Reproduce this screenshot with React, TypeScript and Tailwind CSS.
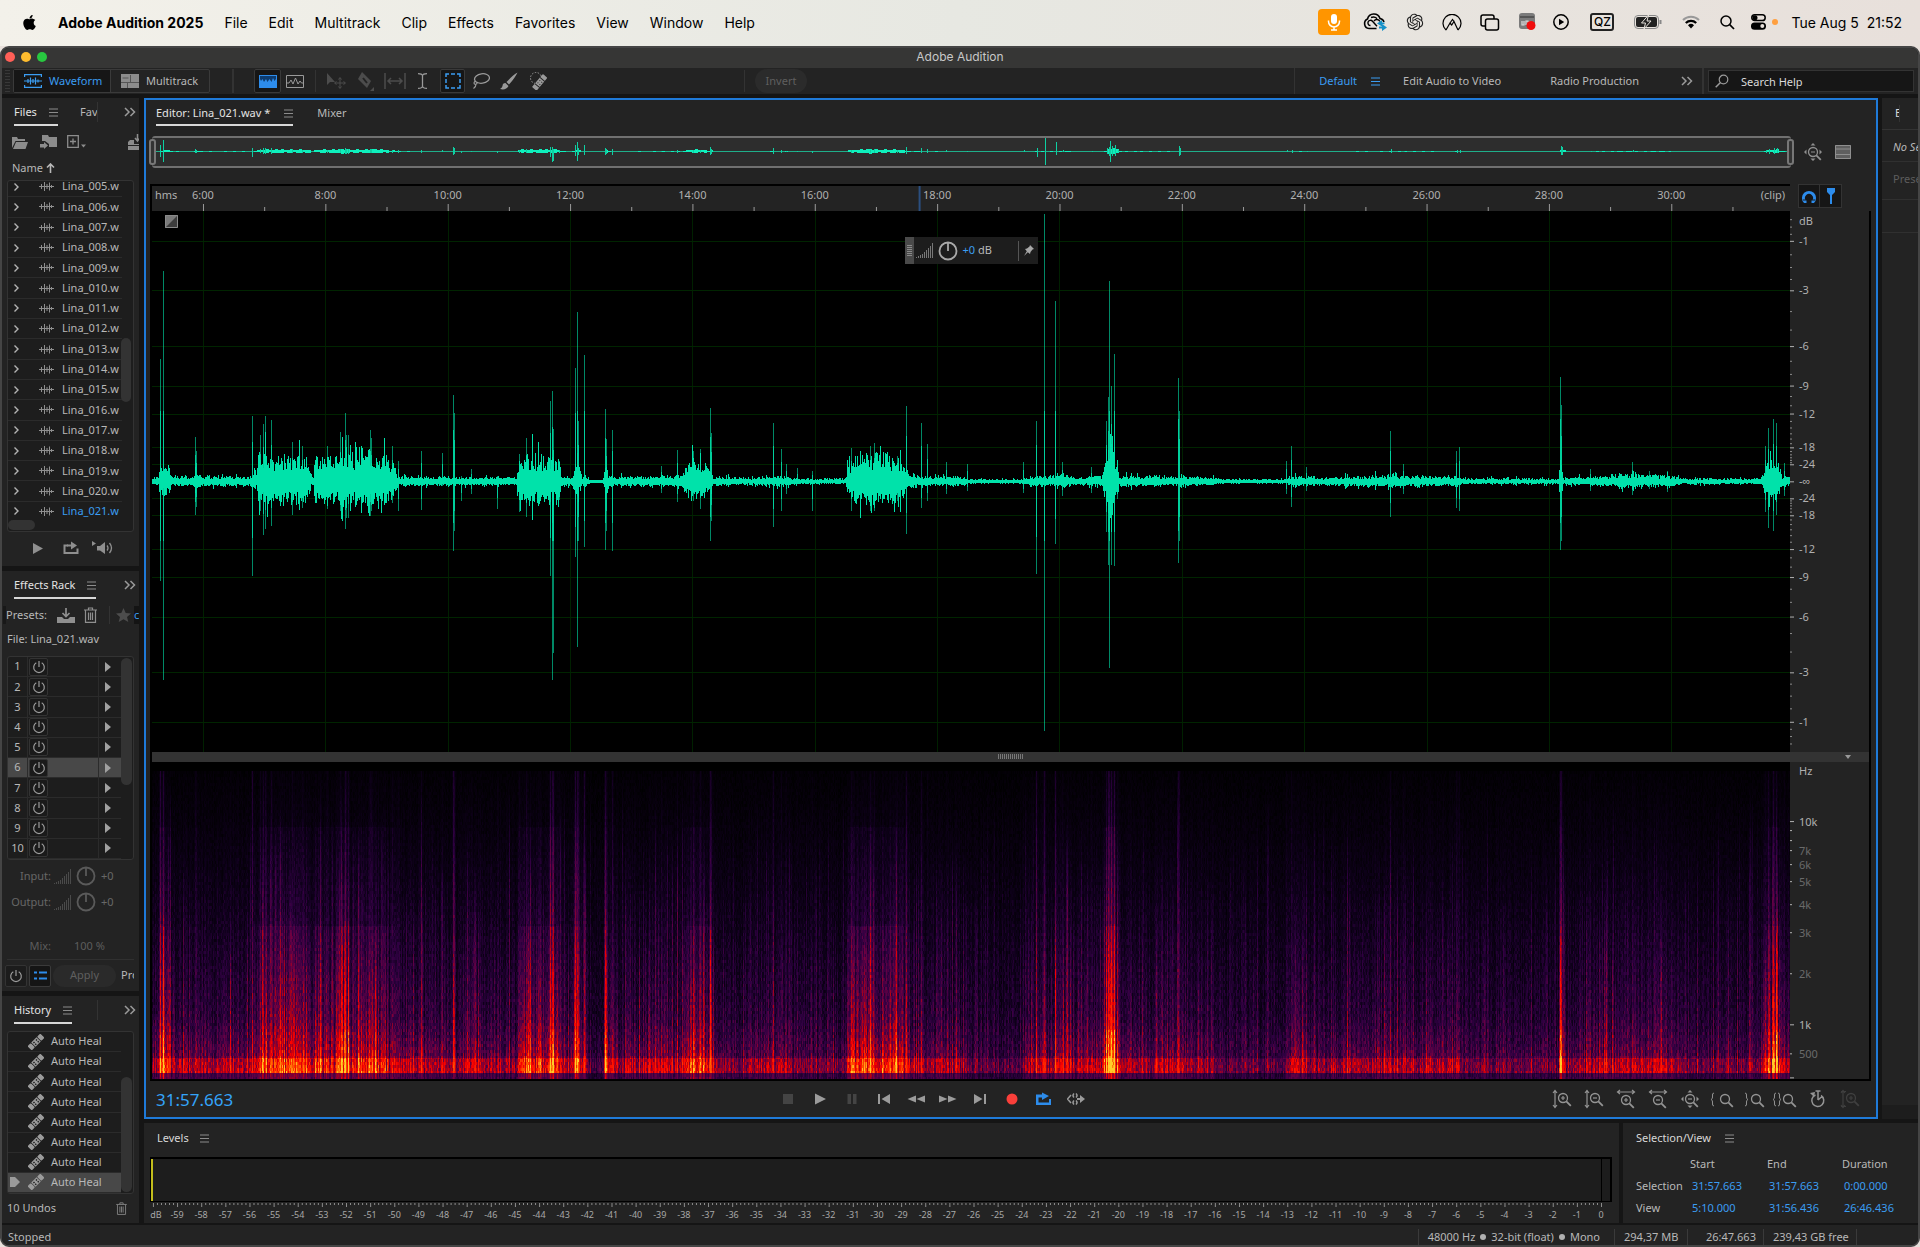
import { useEffect, useRef } from 'react';
import type { ReactNode } from 'react';
import { FaApple } from 'react-icons/fa';
import { RiOpenaiFill } from 'react-icons/ri';

/* ---------- data ---------- */

const menus = ['File', 'Edit', 'Multitrack', 'Clip', 'Effects', 'Favorites', 'View', 'Window', 'Help'];

const files = Array.from({ length: 17 }, (_, i) => `Lina_${String(i + 5).padStart(3, '0')}.wav`);

const VIEW_W = 1638;
const VIEW_H = 540;
const MID = 270;

// [x, peak above, peak below]
const spikes: [number, number, number][] = [
  [8, 122, 100], [11, 210, 198], [43, 44, 34], [44, 30, 26], [100, 65, 95], [108, 46, 30], [111, 57, 54], [113, 65, 48],
  [119, 61, 45], [140, 39, 34], [150, 35, 27], [175, 35, 28], [188, 49, 30], [193, 68, 48], [194, 46, 37],
  [196, 46, 37], [218, 51, 35], [219, 43, 30], [240, 35, 22], [246, 20, 30], [269, 30, 29], [290, 28, 5],
  [301, 86, 70], [302, 68, 50], [309, 5, 20], [319, 12, 13], [345, 5, 28], [367, 27, 31], [374, 43, 36],
  [398, 80, 95], [400, 90, 198], [401, 52, 171], [407, 20, 19], [423, 113, 76], [425, 169, 165], [426, 60, 60],
  [432, 126, 66], [453, 72, 69], [454, 42, 50], [460, 51, 70], [509, 15, 12], [525, 31, 21], [541, 30, 20],
  [548, 32, 28], [558, 73, 60], [559, 48, 40], [621, 58, 46], [629, 32, 30], [634, 17, 13], [645, 13, 3],
  [660, 10, 30], [699, 33, 30], [718, 35, 30], [722, 38, 30], [745, 25, 20], [754, 75, 53], [769, 58, 27],
  [775, 37, 20], [794, 19, 13], [815, 17, 10], [871, 19, 12], [884, 60, 93], [892, 267, 249], [903, 180, 63],
  [910, 19, 15], [939, 14, 12], [954, 60, 51], [956, 84, 84], [957, 200, 186], [959, 95, 84], [962, 127, 85],
  [965, 20, 18], [1026, 103, 82], [1027, 70, 60], [1134, 20, 13], [1139, 35, 26], [1154, 14, 10], [1238, 50, 36],
  [1251, 17, 13], [1304, 30, 27], [1307, 34, 30], [1408, 104, 69], [1409, 76, 60], [1438, 12, 10], [1480, 19, 14],
  [1497, 10, 8], [1515, 10, 11], [1613, 35, 31], [1616, 53, 47], [1621, 62, 50], [1624, 58, 34], [1632, 18, 15],
];

// loudness outline: [x, amplitude]
const outline: [number, number][] = [
  [0, 4], [6, 5], [8, 18], [16, 14], [20, 6], [41, 5], [43, 14], [47, 6], [98, 5], [101, 12], [104, 9], [108, 24],
  [140, 25], [155, 22], [159, 7], [161, 6], [163, 25], [200, 26], [234, 24], [237, 10], [240, 20], [246, 6],
  [260, 5], [364, 4], [367, 22], [376, 25], [406, 24], [409, 7], [419, 5], [424, 18], [430, 6], [436, 3],
  [440, 1], [449, 1], [451, 5], [453, 18], [457, 6], [466, 5], [528, 6], [534, 16], [541, 22], [557, 14],
  [561, 5], [595, 4], [632, 6], [640, 3], [693, 3], [696, 18], [704, 24], [722, 28], [740, 24], [752, 16],
  [756, 8], [762, 9], [768, 5], [812, 5], [818, 2], [870, 2], [884, 6], [905, 6], [912, 8], [923, 4], [950, 5],
  [954, 30], [958, 60], [962, 30], [967, 6], [1008, 6], [1060, 4], [1070, 2], [1134, 2], [1138, 6], [1172, 4],
  [1180, 5], [1230, 6], [1244, 6], [1296, 5], [1303, 6], [1310, 3], [1406, 3], [1408, 24], [1411, 4], [1440, 5],
  [1470, 8], [1486, 7], [1520, 6], [1530, 3], [1608, 3], [1613, 14], [1618, 30], [1625, 20], [1630, 5], [1638, 5],
];

const dbMajor = [1, 3, 6, 9, 12, 18, 24];
const dbMinor = [0.25, 0.5, 0.75, 1.5, 2, 2.5, 4, 5, 7, 8, 10, 11, 13, 14, 15, 16, 17, 19, 20, 21, 22, 23];

const hzTicks: { y: number; label?: string; strong?: boolean }[] = [
  { y: 59, label: '10k', strong: true },
  { y: 68 },
  { y: 78 },
  { y: 88, label: '7k' },
  { y: 102, label: '6k' },
  { y: 119, label: '5k' },
  { y: 142, label: '4k' },
  { y: 170, label: '3k' },
  { y: 211, label: '2k' },
  { y: 262, label: '1k', strong: true },
  { y: 291, label: '500' },
  { y: 315, strong: true },
];

/* ---------- helpers ---------- */

function rng(seed: number) {
  let s = seed;
  return () => {
    s = (s * 1664525 + 1013904223) >>> 0;
    return s / 4294967296;
  };
}

function loudness(x: number) {
  for (let i = 1; i < outline.length; i++) {
    const [x1, a1] = outline[i];
    if (x <= x1) {
      const [x0, a0] = outline[i - 1];
      return a0 + ((a1 - a0) * (x - x0)) / (x1 - x0);
    }
  }
  return 4;
}

const dbToY = (db: number) => 269.5 * Math.pow(10, -db / 20);
const minuteToX = (m: number) => ((m - 5.1667) / 26.774) * 100;

function buildWave() {
  const rand = rng(21);
  let body = '';
  for (let x = 0; x < VIEW_W; x++) {
    const a = loudness(x);
    const burst = rand() > 0.86 ? 1.2 + rand() * 0.6 : 1;
    const quiet = a < 10 ? 0.85 : 1;
    const up = Math.max(1, Math.round(a * quiet * (0.4 + rand() * 0.75) * burst));
    const down = Math.max(1, Math.round(a * quiet * (0.38 + rand() * 0.6) * burst));
    body += `M${x} ${MID - up}h1V${MID + 1 + down}h-1z`;
  }
  return body;
}

const wavePath = buildWave();

/* ---------- icons ---------- */

function Svg({ w = 18, h = 18, children, className = '' }: { w?: number; h?: number; children: ReactNode; className?: string }) {
  return (
    <svg width={w} height={h} viewBox={`0 0 ${w} ${h}`} fill="none" stroke="currentColor" className={`shrink-0 ${className}`} aria-hidden="true">
      {children}
    </svg>
  );
}

const Burger = ({ className = 'text-[#8c8c8c]' }: { className?: string }) => (
  <Svg w={9} h={9} className={className}>
    <path d="M0 1h9M0 4.500h9M0 8h9" />
  </Svg>
);

const Chevrons = () => (
  <Svg w={12} h={10} className="text-[#9a9a9a]">
    <path d="M1 1l4 4-4 4M6.500 1l4 4-4 4" strokeWidth="1.500" />
  </Svg>
);

const WaveGlyph = () => (
  <Svg w={15} h={11} className="text-[#8f8f8f]">
    <path d="M0 5.500h15M2.500 3v5M5.500 1v9M8 3v5M10.500 1.500v8M12.500 4v3" />
  </Svg>
);

const Power = () => (
  <Svg w={14} h={14} className="text-[#9b9b9b]">
    <path d="M4.300 2.700a5.300 5.300 0 1 0 5.400 0M7 1v6" strokeWidth="1.200" />
  </Svg>
);

const Bandaid = () => (
  <Svg w={16} h={16} className="text-[#9b9b9b]">
    <g transform="rotate(-45 8 8)" stroke="none" fill="currentColor">
      <rect x="-1" y="5" width="4.500" height="6" rx="1" />
      <rect x="12.500" y="5" width="4.500" height="6" rx="1" />
      <path d="M4.300 5h7.400v6H4.300z" />
      <path d="M5.500 6.200h1.500v1.400H5.500zM9 6.200h1.500v1.400H9zM5.500 8.700h1.500v1.400H5.500zM9 8.700h1.500v1.400H9z" fill="#1d1d1d" />
    </g>
  </Svg>
);

const Loop = () => (
  <Svg w={16} h={14}>
    <path d="M5 4.500H1.500v7.500h13V7.500" strokeWidth="2" />
    <path d="M4 4.500h5" strokeWidth="2" />
    <path d="M8 .5l6 4-6 4z" fill="currentColor" stroke="none" />
  </Svg>
);

const Trash = ({ w = 13, h = 16 }: { w?: number; h?: number }) => (
  <svg width={w} height={h} viewBox="0 0 13 16" fill="none" stroke="currentColor" className="shrink-0" aria-hidden="true">
    <path d="M0 3h13M4.500 3V1h4v2M1.500 3v12.300h10V3M4.500 5.500v7.500M6.500 5.500v7.500M8.500 5.500v7.500" strokeWidth="1.200" />
  </svg>
);

const Ramp = ({ className }: { className: string }) => (
  <Svg w={17} h={15} className={className}>
    <path d="M.5 14v1M2.500 13v2M4.500 12v3M6.500 11v4M8.500 9v6M10.500 7v8M12.500 5v10M14.500 3v12M16.500 0v15" />
  </Svg>
);

const Knob = ({ className }: { className: string }) => (
  <Svg w={20} h={20} className={className}>
    <circle cx="10" cy="10" r="8.500" strokeWidth="1.800" />
    <path d="M10 1.500v8.500" strokeWidth="1.800" />
  </Svg>
);

const Lens = ({ sign, x = 4, y = 1 }: { sign?: '+' | '-'; x?: number; y?: number }) => (
  <g transform={`translate(${x} ${y})`}>
    <circle cx="6" cy="6" r="4.500" strokeWidth="1.300" />
    <path d="M9.300 9.300l4.500 4.500" strokeWidth="1.800" />
    {sign && <path d={sign === '+' ? 'M4 6h4M6 4v4' : 'M4 6h4'} strokeWidth="1.200" />}
  </g>
);

const zoomFull = (
  <>
    <Lens sign="-" x={3} y={3} />
    <path d="M9 0l2.500 2.500h-5zM9 18l2.500-2.500h-5zM0 9l2.500-2.500v5zM18 9l-2.500-2.500v5z" fill="currentColor" stroke="none" />
  </>
);

const vArrow = <path d="M2 1v16M0 3l2-2.500L4 3M0 15l2 2.500L4 15" strokeWidth="1.200" />;
const hArrow = <path d="M1 2h16M3 0L.5 2 3 4M15 0l2.500 2L15 4" strokeWidth="1.200" />;

const zoomTools: { label: string; icon: ReactNode; dim?: boolean }[] = [
  { label: 'Zoom in amplitude', icon: <>{vArrow}<Lens sign="+" x={4} y={2} /></> },
  { label: 'Zoom out amplitude', icon: <>{vArrow}<Lens sign="-" x={4} y={2} /></> },
  { label: 'Zoom in time', icon: <>{hArrow}<Lens sign="+" x={3} y={4} /></> },
  { label: 'Zoom out time', icon: <>{hArrow}<Lens sign="-" x={3} y={4} /></> },
  { label: 'Zoom out full', icon: zoomFull },
  { label: 'Zoom in at in point', icon: <><path d="M1 3q-2 0-1.500 3T-2 9.500q2 .5 1.500 3.500T1 16" /><Lens x={6} y={3} /></> },
  { label: 'Zoom in at out point', icon: <><path d="M0 3q2 0 1.500 3T3 9.500q-2 .5-1.500 3.500T0 16" /><Lens x={5} y={3} /></> },
  { label: 'Zoom to selection', icon: <><path d="M-1 3q-2 0-1.500 3T-4 9.500q2 .5 1.500 3.500T-1 16M1 3q2 0 1.500 3T4 9.500q-2 .5-1.500 3.500T1 16" /><Lens x={5} y={3} /></> },
  { label: 'Timed record', icon: <><path d="M6.500 5A6 6 0 1 0 12 5.500M9 4v6M9 10l4-3.500M6.500 1h5M9 1v3" strokeWidth="1.500" /><path d="M1 3l5-1-1 5z" fill="currentColor" stroke="none" /></> },
  { label: 'Zoom all tracks', dim: true, icon: <><path d="M0 1.500h5M0 16.500h5" />{vArrow}<Lens sign="+" x={4} y={2} /></> },
];

const transport: { label: string; tone: string; icon: ReactNode }[] = [
  { label: 'Stop', tone: 'text-[#444]', icon: <path d="M4 4h10v10H4z" /> },
  { label: 'Play', tone: 'text-[#9b9b9b]', icon: <path d="M4 3.500l11 5.500-11 5.500z" /> },
  { label: 'Pause', tone: 'text-[#444]', icon: <path d="M4.500 4H8v10H4.500zM10 4h3.500v10H10z" /> },
  { label: 'Move to previous', tone: 'text-[#9b9b9b]', icon: <path d="M3 4h2v10H3zM15 4v10L6.500 9z" /> },
  { label: 'Rewind', tone: 'text-[#9b9b9b]', icon: <path d="M9 5.500v7L.500 9zM18 5.500v7L9.500 9z" /> },
  { label: 'Fast forward', tone: 'text-[#9b9b9b]', icon: <path d="M0 5.500v7L8.500 9zM9 5.500v7l8.500-3.500z" /> },
  { label: 'Move to next', tone: 'text-[#9b9b9b]', icon: <path d="M3 4v10l8.500-5zM13 4h2v10h-2z" /> },
  { label: 'Record', tone: 'text-[#fa3f3a]', icon: <circle cx="9" cy="9" r="5.500" /> },
  {
    label: 'Loop playback',
    tone: 'text-[#2d8ceb]',
    icon: <path d="M1 4.500h6V2.500l7 3.500-7 4V7.500H3.500v5h10.500V9H16v6H1z" />,
  },
  {
    label: 'Skip selection',
    tone: 'text-[#9b9b9b]',
    icon: (
      <>
        <path d="M4 5L.500 9 4 13M7 3.500q-2 2 0 4M7 10.500q-2 2 0 4M9 3.500q2 2 0 4M9 10.500q2 2 0 4" fill="none" stroke="currentColor" strokeWidth="1.500" />
        <path d="M10 8h3V5l5 4-5 4v-3h-3z" />
      </>
    ),
  },
];

/* ---------- mac menu bar ---------- */

function MenuBar() {
  return (
    <header className="flex h-[46px] shrink-0 items-center bg-linear-to-r from-[#f3f1ea] via-[#e7e8e2] to-[#e8e0db] pr-[18px] pb-[2px] pl-[21px] font-['Inter',sans-serif] text-[14px] text-black">
      <FaApple className="mr-[20px] size-[17px]" />
      <nav className="flex items-center gap-[21px]">
        <span className="font-bold">Adobe Audition 2025</span>
        {menus.map((m) => (
          <button key={m}>{m}</button>
        ))}
      </nav>
      <div className="ml-auto flex items-center">
        <span className="mr-[13px] flex h-[26px] w-[32px] items-center justify-center rounded-[4px] bg-[#ff9500] text-white">
          <Svg w={14} h={18}>
            <rect x="4" y="1" width="6" height="10" rx="3" fill="currentColor" stroke="none" />
            <path d="M1.500 7.500v1a5.500 5.500 0 0 0 11 0v-1M7 14v3M4 17h6" strokeWidth="1.500" />
          </Svg>
        </span>
        <span className="mr-[18px]">
          <Svg w={24} h={18}>
            <path d="M6 15.500a5 5 0 0 1-1.500-9.500A6.500 6.500 0 0 1 17 5.500a5 5 0 0 1 4 3.500" strokeWidth="1.600" />
            <path d="M7.500 12.500a2.600 2.600 0 1 1 2-4.300l4.500 5M11 8a3.500 3.500 0 0 1 6 .500M6 15.500h7.500M8 4.500a5.500 5.500 0 0 1 6 1" strokeWidth="1.400" />
            <path d="M19 7l-5 3.500 5 3v-2.300h2.500V9.500H19z" fill="#1591c9" stroke="none" />
            <path d="M19 11l5 3.500-5 3.500v-2.500h-3V13.500h3z" fill="#1591c9" stroke="none" />
          </Svg>
        </span>
        <RiOpenaiFill className="mr-[17px] size-[20px] text-[#222]" />
        <span className="mr-[18px]">
          <Svg w={20} h={17}>
            <path d="M4 16A9 9 0 1 1 16 16M4 16l4-7 1.700 2L12 7.500l4 8.500M12 7.500L10.500 5.500 8 9" strokeWidth="1.200" />
          </Svg>
        </span>
        <span className="mr-[19px]">
          <Svg w={20} h={17}>
            <path d="M5 12H3a2 2 0 0 1-2-2V3a2 2 0 0 1 2-2h9a2 2 0 0 1 2 2v2" strokeWidth="1.500" />
            <rect x="5.500" y="5" width="13" height="11" rx="2" strokeWidth="1.500" />
          </Svg>
        </span>
        <span className="mr-[17px]">
          <Svg w={17} h={18}>
            <rect x="0" y="0" width="16" height="16" rx="3" fill="#7b7b7b" stroke="none" />
            <path d="M1 4h14" stroke="#555" strokeWidth="2" />
            <path d="M3 8v4h2V8M7 12V8h2v2M11 8v4" stroke="#ddd" strokeWidth="1.200" />
            <circle cx="12" cy="12.500" r="4.500" fill="#f00d0d" stroke="none" />
          </Svg>
        </span>
        <span className="mr-[21px]">
          <Svg w={16} h={16}>
            <circle cx="8" cy="8" r="7.200" strokeWidth="1.500" />
            <path d="M6 4.800l5.200 3.200L6 11.200z" fill="currentColor" stroke="none" />
          </Svg>
        </span>
        <span className="mr-[20px] flex h-[18px] w-[24px] items-center justify-center rounded-[3px] border-2 border-[#222] text-[12px] font-medium">QZ</span>
        <span className="mr-[20px]">
          <Svg w={28} h={14}>
            <rect x=".500" y=".500" width="24" height="13" rx="3.500" stroke="#888" />
            <rect x="2" y="2" width="21" height="10" rx="2" fill="#222" stroke="none" />
            <path d="M26.500 5v4" stroke="#888" strokeWidth="2" />
            <path d="M14.500 0l-7 8h4l-1.500 6 7-8h-4z" fill="#222" stroke="#e8e4de" strokeWidth="1" />
          </Svg>
        </span>
        <span className="mr-[20px]">
          <Svg w={18} h={14}>
            <path d="M1 5a11.500 11.500 0 0 1 16 0" stroke="#999" strokeWidth="2" />
            <path d="M3.800 8a7.400 7.400 0 0 1 10.400 0" strokeWidth="2.200" />
            <path d="M9 13.500l-3-3.200a4.300 4.300 0 0 1 6 0z" fill="currentColor" stroke="none" />
          </Svg>
        </span>
        <span className="mr-[16px]">
          <Svg w={15} h={15}>
            <circle cx="6" cy="6" r="5" strokeWidth="1.500" />
            <path d="M9.700 9.700l4.300 4.300" strokeWidth="1.700" />
          </Svg>
        </span>
        <span className="mr-[6px]">
          <Svg w={15} h={16}>
            <rect x=".800" y=".800" width="13.400" height="5.800" rx="2.900" strokeWidth="1.500" />
            <circle cx="4" cy="3.700" r="2.500" fill="currentColor" stroke="none" />
            <rect x="0" y="8.500" width="15" height="7.300" rx="3.600" fill="currentColor" stroke="none" />
            <circle cx="11.300" cy="12.100" r="2" fill="#e8e0db" stroke="none" />
          </Svg>
        </span>
        <span className="mr-[13px] size-[6px] rounded-full bg-[#ff9f3f]" />
        <span className="whitespace-pre">Tue Aug 5  21:52</span>
      </div>
    </header>
  );
}

/* ---------- application toolbar ---------- */

function ToolBar() {
  return (
    <div className="flex h-[26px] shrink-0 items-center bg-[#232323]">
      <span className="ml-[3px] h-[22px] w-[5px] bg-[repeating-linear-gradient(#383838_0_1px,transparent_1px_3px)]" />
      <div className="ml-[3px] flex h-[24px] rounded-[2px] border border-[#3a3a3a]">
        <button className="flex w-[97px] items-center gap-[7px] border-r border-[#3a3a3a] bg-[#161616] pl-[10px] text-[#3b9df2]">
          <Svg w={18} h={14}>
            <path d="M.600 3V.600h16.800V3M.600 11v2.400h16.800V11M0 7h18M4 5v4M6.500 3.500v7M9 5v4M11.500 3.500v7M14 5.500v3" strokeWidth="1.200" />
          </Svg>
          Waveform
        </button>
        <button className="flex w-[98px] items-center gap-[7px] pl-[10px]">
          <Svg w={18} h={14} className="text-[#8c8c8c]">
            <path d="M0 0h18v14H0z" fill="currentColor" stroke="none" />
            <path d="M9.500 1v7M0 8.500h18M6.500 9v5M1.500 4h6" stroke="#555" />
          </Svg>
          Multitrack
        </button>
      </div>
      <span className="ml-[22px] h-[24px] w-[2px] bg-[#333]" />
      <button aria-label="Show spectral frequency" className="ml-[20px] flex h-[24px] w-[27px] items-center justify-center rounded-[2px] border border-[#3a3a3a] bg-[#161616] text-[#2d8ceb]">
        <Svg w={18} h={13}>
          <path d="M0 0h18v13H0z" fill="currentColor" stroke="none" />
          <path d="M1 1h16v3l-1.500 2-1.500-3-1.500 4-2-3-2 3-1.500-3-2 3L3.500 4 2 6 1 4z" fill="#0d3c70" stroke="none" />
        </Svg>
      </button>
      <button aria-label="Show spectral pitch" className="ml-[5px] text-[#9a9a9a]">
        <Svg w={18} h={13}>
          <path d="M.500.500h17v12H.500zM0 8h3l2-3 2 4 2.500-6L12 9l2-3 1.500 2H18" />
        </Svg>
      </button>
      <span className="ml-[11px] h-[22px] w-px bg-[#333]" />
      <div className="ml-[10px] flex items-center gap-[9px] text-[#4c4c4c]">
        <button aria-label="Move tool">
          <Svg w={20} h={18}>
            <path d="M1 1v12l3-3h5z" fill="currentColor" stroke="none" />
            <path d="M14 6v10M9 11h10M12.500 7.500L14 5.500l1.500 2M12.500 14.500l1.500 2 1.500-2M10.500 9.500L8.500 11l2 1.500M17.500 9.500l2 1.500-2 1.500" />
          </Svg>
        </button>
        <button aria-label="Razor tool">
          <Svg w={20} h={20}>
            <path d="M7 1l9 9-4 7-9-9z" fill="currentColor" stroke="none" />
            <path d="M8 7l4 5" stroke="#232323" strokeWidth="2" />
            <path d="M19 16v4h-4z" fill="currentColor" stroke="none" />
          </Svg>
        </button>
        <button aria-label="Slip tool">
          <Svg w={22} h={16}>
            <path d="M1 0v16M21 0v16M4 8h14M7 5L4 8l3 3M15 5l3 3-3 3" strokeWidth="1.500" />
          </Svg>
        </button>
      </div>
      <button aria-label="Time selection tool" className="ml-[12px] text-[#9a9a9a]">
        <Svg w={9} h={16}>
          <path d="M0 .700q4 0 4.500 2 .5-2 4.500-2M4.500 2v12M0 15.300q4 0 4.500-2 .5 2 4.500 2" strokeWidth="1.300" />
        </Svg>
      </button>
      <button aria-label="Marquee selection tool" className="ml-[13px] flex h-[24px] w-[25px] items-center justify-center rounded-[2px] border border-[#3a3a3a] bg-[#161616] text-[#3b9df2]">
        <Svg w={16} h={16}>
          <path d="M1 4V1h3M6 1h4M12 1h3v3M15 6v4M15 12v3h-3M10 15H6M4 15H1v-3M1 10V6" strokeWidth="1.500" />
        </Svg>
      </button>
      <button aria-label="Lasso selection tool" className="ml-[7px] text-[#9a9a9a]">
        <Svg w={18} h={16}>
          <ellipse cx="10" cy="5.500" rx="7.500" ry="4.700" strokeWidth="1.300" transform="rotate(-8 10 5.500)" />
          <path d="M3.500 8q-3 2 0 3.500 2-.5 1.500-2.500M4 11q0 3-2.500 4.500" strokeWidth="1.200" />
        </Svg>
      </button>
      <button aria-label="Paintbrush selection tool" className="ml-[10px] text-[#9a9a9a]">
        <Svg w={18} h={18}>
          <path d="M17.500.500Q13 3 6.500 10l2.500 2.500Q15 6 17.500.500zM5.500 11q-3 0-3 3-.5 2-2.500 3 6 1.500 8.500-3z" fill="currentColor" stroke="none" />
        </Svg>
      </button>
      <button aria-label="Spot healing brush tool" className="ml-[11px] text-[#9a9a9a]">
        <Svg w={20} h={18}>
          <circle cx="7" cy="6" r="5.500" strokeDasharray="1.500 1.500" />
          <g transform="rotate(-50 11 10)">
            <rect x="2" y="7" width="17" height="6" rx="1" fill="currentColor" stroke="none" />
            <path d="M6.500 7v6.500M14.500 7v6.500M8.500 9h1M11.500 9h1M8.500 11.500h1M11.500 11.500h1" stroke="#232323" />
          </g>
        </Svg>
      </button>
      <span className="ml-[195px] h-[22px] w-px bg-[#333]" />
      <button className="ml-[10px] h-[24px] w-[52px] rounded-full bg-[#2b2b2b] text-[#5f5f5f]">Invert</button>
      <div className="ml-auto flex h-full items-center">
        <span className="h-full w-px bg-[#333]" />
        <button className="ml-[24px] text-[#3b9df2]">Default</button>
        <Burger className="ml-[14px] text-[#3b9df2]" />
        <button className="ml-[23px]">Edit Audio to Video</button>
        <button className="ml-[49px]">Radio Production</button>
        <button aria-label="More workspaces" className="ml-[42px]"><Chevrons /></button>
        <span className="ml-[9px] h-full w-[2px] bg-[#333]" />
        <label className="mr-[4px] ml-[4px] flex h-[22px] w-[206px] items-center gap-[12px] border border-[#333] bg-[#161616] pl-[6px]">
          <Svg w={14} h={14} className="text-[#9a9a9a]">
            <circle cx="8.500" cy="5.500" r="4.300" strokeWidth="1.200" />
            <path d="M5.500 8.500L.700 13.300" strokeWidth="1.500" />
          </Svg>
          <input aria-label="Search Help" placeholder="Search Help" className="w-[150px] bg-transparent pt-[3px] text-[11px] outline-none placeholder:text-[#dadada]" />
        </label>
      </div>
    </div>
  );
}

/* ---------- left column ---------- */

function PanelTabs({ title, next }: { title: string; next: string }) {
  return (
    <div className="flex h-[30px] shrink-0 items-start pl-[12px]">
      <button className="flex h-[28px] items-center gap-[12px] border-b-2 border-[#d8d8d8] pt-[2px] whitespace-nowrap text-[#e4e4e4]">
        {title}
        <Burger />
      </button>
      <div className="ml-auto flex h-[28px] items-center">
        {next && <span className="h-[20px] w-[18px] overflow-hidden border-r border-[#333] leading-[20px]">{next}</span>}
        <button aria-label="More panels" className="mr-[3px] ml-[26px]"><Chevrons /></button>
      </div>
    </div>
  );
}

function FilesPanel() {
  return (
    <section className="flex h-[468px] shrink-0 flex-col bg-[#232323]">
      <PanelTabs title="Files" next="Fav" />
      <div className="flex h-[28px] items-center overflow-hidden pl-[10px] text-[#8c8c8c]">
        <button aria-label="Open file">
          <Svg w={16} h={13}>
            <path d="M0 12V1h5l1 2h7v2H3.500zM4 6h12l-2.500 7H1z" fill="currentColor" stroke="none" />
          </Svg>
        </button>
        <button aria-label="Import file" className="ml-[12px]">
          <Svg w={17} h={14}>
            <path d="M2 0h6l1 2h8v10H9V9L5 6H2z" fill="currentColor" stroke="none" />
            <path d="M0 12.500h4V14l4-3.500L4 7v2H0z" fill="currentColor" stroke="none" />
          </Svg>
        </button>
        <button aria-label="New file" className="ml-[10px]">
          <Svg w={19} h={14}>
            <path d="M.700.700h10.600v11.600H.700zM6 3.500v6M3 6.500h6" strokeWidth="1.300" />
            <path d="M14 9.500h5l-2.500 3z" fill="currentColor" stroke="none" />
          </Svg>
        </button>
        <button aria-label="Insert into multitrack" className="ml-auto">
          <Svg w={11} h={17}>
            <path d="M0 16V8l2-2h4v4h5v6z" fill="currentColor" stroke="none" />
            <path d="M9.500 0v6M7 4l2.500 3L12 4" strokeWidth="1.500" />
            <path d="M0 11.500h11" stroke="#232323" />
          </Svg>
        </button>
      </div>
      <button className="flex h-[24px] items-center gap-[3px] pl-[10px]">
        Name
        <Svg w={9} h={10}>
          <path d="M4.500 10V1M1 4.500L4.500 1 8 4.500" strokeWidth="1.600" />
        </Svg>
      </button>
      <div className="relative mr-[5px] ml-[5px] flex h-[352px] flex-col justify-end overflow-hidden rounded-[3px] border border-[#333] bg-[#1d1d1d] pb-[10px]">
        <ul className="flex h-[344px] w-[114px] shrink-0 flex-col">
          {files.map((f, i) => (
            <li key={f} className={`flex flex-1 items-center overflow-hidden border-[#2b2b2b] ${i < 16 ? 'border-b' : ''}`}>
              <Svg w={5} h={8} className="ml-[6px] text-[#b4b4b4]">
                <path d="M.500.500L4 4 .500 7.500" strokeWidth="1.400" />
              </Svg>
              <span className="ml-[20px]"><WaveGlyph /></span>
              <span className={`ml-[8px] w-[57px] overflow-hidden ${i === 16 ? 'text-[#3b9df2]' : ''}`}>{f}</span>
            </li>
          ))}
        </ul>
        <span className="absolute top-[157px] right-[2px] h-[64px] w-[10px] rounded-full bg-[#333]" />
        <span className="absolute bottom-[1px] left-0 h-[10px] w-[27px] rounded-full bg-[#333]" />
      </div>
      <div className="flex flex-1 items-center pb-[2px] pl-[31px] text-[#8f8f8f]">
        <button aria-label="Play file"><Svg w={10} h={11}><path d="M0 0l10 5.500L0 11z" fill="currentColor" stroke="none" /></Svg></button>
        <button aria-label="Loop file" className="ml-[20px]"><Loop /></button>
        <button aria-label="Auto-play" className="ml-[13px]">
          <Svg w={22} h={14}>
            <path d="M0 0l4 2.500L0 5zM5 5h3l5-4v12L8 9.500H5z" fill="currentColor" stroke="none" />
            <path d="M15 4.500q2 2.500 0 5M17.500 2q4 5 0 10" strokeWidth="1.300" />
          </Svg>
        </button>
      </div>
    </section>
  );
}

function EffectsPanel() {
  return (
    <section className="flex h-[420px] shrink-0 flex-col bg-[#232323]">
      <PanelTabs title="Effects Rack" next="" />
      <div className="flex h-[28px] items-center overflow-hidden pl-[1px]">
        <span className="h-[18px] w-[3px] overflow-hidden bg-[#181818]" />
        <span className="whitespace-nowrap">Presets:</span>
        <span className="ml-[10px] flex gap-[9px] text-[#8f8f8f]">
          <button aria-label="Save preset">
            <Svg w={18} h={15}>
              <path d="M0 9h5l2 2h4l2-2h5v6H0z" fill="currentColor" stroke="none" />
              <path d="M9 0v8M5.500 5L9 8.500 12.500 5" strokeWidth="1.700" />
            </Svg>
          </button>
          <button aria-label="Delete preset"><Trash /></button>
        </span>
        <span className="ml-[12px] h-[18px] w-px bg-[#333]" />
        <Svg w={15} h={14} className="ml-[6px] text-[#4d4d4d]">
          <path d="M7.500 0l2.200 5 5.300.400-4 3.500 1.300 5.100-4.800-2.800L2.700 14 4 8.900 0 5.400 5.300 5z" fill="currentColor" stroke="none" />
        </Svg>
        <span className="ml-auto h-[18px] w-[5px] overflow-hidden bg-[#141414] leading-[18px] text-[#3b9df2]">c</span>
      </div>
      <p className="flex h-[20px] items-center pl-[5px]">File: Lina_021.wav</p>
      <div className="relative mx-[5px] mt-[7px] h-[204px] rounded-[3px] border border-[#333] bg-[#1d1d1d]">
        <ol className="flex h-full w-[113px] flex-col">
          {Array.from({ length: 10 }, (_, i) => (
            <li key={i} className={`flex flex-1 items-center border-b border-[#2b2b2b] ${i === 5 ? 'bg-[#484848]' : ''}`}>
              <span className="flex h-full w-[20px] items-center justify-center border-r border-[#2b2b2b]">{i + 1}</span>
              <button aria-label={`Toggle effect ${i + 1}`} className="ml-[1px] flex h-[18px] w-[19px] items-center justify-center rounded-[2px] border border-[#333] bg-[#1a1a1a]"><Power /></button>
              <span className="ml-auto h-full w-px bg-[#2b2b2b]" />
              <button aria-label={`Effect ${i + 1} menu`} className="mr-[10px] ml-[6px] text-[#a0a0a0]">
                <Svg w={6} h={10}><path d="M0 0l6 5-6 5z" fill="currentColor" stroke="none" /></Svg>
              </button>
            </li>
          ))}
        </ol>
        <span className="absolute top-[1px] right-[1px] h-[127px] w-[11px] rounded-full bg-[#333]" />
      </div>
      <div className="mt-[3px] text-[#676767]">
        {['Input:', 'Output:'].map((label) => (
          <div key={label} className="flex h-[26px] items-center">
            <span className="w-[49px] text-right">{label}</span>
            <Ramp className="ml-[3px] text-[#4a4a4a]" />
            <Knob className="ml-[5px] text-[#5a5a5a]" />
            <span className="ml-[5px]">+0</span>
          </div>
        ))}
      </div>
      <div className="mx-[5px] mt-[12px] flex h-[33px] items-start border-b border-[#303030] pt-[9px] leading-[20px] text-[#5d5d5d]">
        <span className="w-[44px] text-right">Mix:</span>
        <span className="ml-[23px]">100 %</span>
      </div>
      <div className="flex flex-1 items-center overflow-hidden pl-[3px]">
        <button aria-label="Rack power" className="flex size-[22px] shrink-0 items-center justify-center rounded-[2px] border border-[#333] bg-[#1c1c1c]"><Power /></button>
        <button aria-label="Rack view" className="ml-[2px] flex size-[22px] shrink-0 items-center justify-center rounded-[2px] border border-[#3a3a3a] bg-[#151515] text-[#2d8ceb]">
          <Svg w={13} h={9}><path d="M0 1.500h3M5 1.500h8M0 7.500h3M5 7.500h8" strokeWidth="2" /></Svg>
        </button>
        <button className="ml-[2px] h-[22px] w-[63px] shrink-0 rounded-full bg-[#2a2a2a] text-[#5f5f5f]">Apply</button>
        <span className="mr-[5px] ml-[5px] overflow-hidden">Process:</span>
      </div>
    </section>
  );
}

function HistoryPanel() {
  return (
    <section className="flex flex-1 flex-col bg-[#232323]">
      <PanelTabs title="History" next=" " />
      <div className="relative mx-[5px] mt-[5px] h-[163px] rounded-[3px] border border-[#333] bg-[#1d1d1d]">
        <ul className="flex h-full w-[113px] flex-col">
          {Array.from({ length: 8 }, (_, i) => (
            <li key={i} className={`flex flex-1 items-center border-b border-[#2b2b2b] ${i === 7 ? 'bg-[#484848]' : ''}`}>
              <span className="flex w-[20px] pl-[2px]">
                {i === 7 && <Svg w={10} h={10} className="text-[#9b9b9b]"><path d="M0 0h5l5 5-5 5H0z" fill="currentColor" stroke="none" /></Svg>}
              </span>
              <Bandaid />
              <span className="ml-[7px]">Auto Heal</span>
            </li>
          ))}
        </ul>
        <span className="absolute right-[1px] bottom-[1px] h-[115px] w-[11px] rounded-full bg-[#333]" />
      </div>
      <div className="flex flex-1 items-center justify-between pr-[12px] pl-[5px]">
        10 Undos
        <button aria-label="Delete history" className="text-[#7d7d7d]"><Trash w={11} h={13} /></button>
      </div>
    </section>
  );
}

/* ---------- editor ---------- */

function Overview() {
  return (
    <div className="flex h-[32px] flex-1 items-center">
      <span className="z-10 h-[26px] w-[7px] rounded-[3px] border-2 border-[#777] bg-[#333]" />
      <div className="-mx-[4px] h-[32px] flex-1 rounded-[3px] border-y-2 border-[#707070] bg-[#2d2d2d]">
        <svg className="block h-full w-full" viewBox="0 0 1638 28" preserveAspectRatio="none" shapeRendering="crispEdges" aria-hidden="true">
          <path d="M0 13h1638v1H0z" fill="#1fae8a" />
          {Array.from({ length: VIEW_W / 3 }, (_, i) => {
            const h = Math.floor((loudness(i * 3) * (0.7 + ((i * 37) % 11) / 14)) / 7);
            return h > 0 && <rect key={i} x={i * 3} y={13 - Math.floor(h / 2)} width="3" height={h} fill="#0ef0bd" />;
          })}
          {spikes.map(([x, u, d]) => (
            <rect key={x} x={x} y={13.5 - u * 0.055} width="1" height={(u + d) * 0.055} fill="#0ecfa2" />
          ))}
        </svg>
      </div>
      <span className="z-10 h-[26px] w-[7px] rounded-[3px] border-2 border-[#777] bg-[#333]" />
    </div>
  );
}

function TimeRuler() {
  const minutes = Array.from({ length: 26 }, (_, i) => i + 6);
  return (
    <svg className="block h-[27px] w-full border-t-2 border-black bg-[#232323] text-[11px]" fill="#b0b0b0" aria-hidden="true">
      <text x="3" y="13">hms</text>
      {minutes.map((m) => (
        <g key={m}>
          <rect x={`${minuteToX(m)}%`} y={m % 2 ? 21 : 18} width="1" height="8" fill="#9a9a9a" />
          {m % 2 === 0 && <text x={`${minuteToX(m)}%`} y="13" textAnchor="middle">{m}:00</text>}
        </g>
      ))}
      <text x="99.700%" y="13" textAnchor="end">(clip)</text>
      <rect x="46.800%" y="0" width="2" height="27" fill="#2b4f80" />
    </svg>
  );
}

function Waveform() {
  return (
    <div className="relative min-h-0 flex-[540] bg-black">
      <svg className="absolute inset-0 h-full w-full" viewBox={`0 0 ${VIEW_W} ${VIEW_H}`} preserveAspectRatio="none" shapeRendering="crispEdges" aria-label="Waveform">
        {Array.from({ length: 13 }, (_, i) => (
          <rect key={i} x={(minuteToX(6 + i * 2) * VIEW_W) / 100} y="0" width="1" height={VIEW_H} fill="#002000" />
        ))}
        {dbMajor.map((db) => (
          <g key={db} fill="#002400">
            <rect x="0" y={MID - dbToY(db)} width={VIEW_W} height="1" />
            <rect x="0" y={MID + dbToY(db)} width={VIEW_W} height="1" />
          </g>
        ))}
        <path d={wavePath} fill="#00e2aa" />
        {spikes.map(([x, u, d]) => (
          <g key={x} fill="#00e2aa">
            <rect x={x} y={MID - u} width="1" height={u + d} opacity="0.6" />
            <rect x={x} y={MID - Math.min(u * 0.6, 70)} width="1" height={Math.min(u * 0.6, 70) + Math.min(d * 0.6, 60)} opacity="0.8" />
          </g>
        ))}
      </svg>
      <Svg w={13} h={13} className="absolute top-[4px] left-[13px]">
        <path d="M0 0h13v13H0z" fill="#3c3c3c" stroke="none" />
        <path d="M0 0h13L0 13z" fill="#7a7a7a" stroke="none" />
        <path d="M.500.500h12v12H.500z" stroke="#8a8a8a" />
      </Svg>
      {/* floating gain control */}
      <div className="absolute top-[26px] left-[46%] flex h-[27px] w-[133px] items-center bg-[#1d1d1d]">
        <span className="flex h-full w-[9px] items-center justify-center bg-[#4a4a4a]">
          <span className="h-[12px] w-[5px] bg-[repeating-linear-gradient(#8a8a8a_0_1px,transparent_1px_2px)]" />
        </span>
        <Ramp className="ml-[2px] text-[#777]" />
        <Knob className="ml-[5px] text-[#a8a8a8]" />
        <span className="ml-[4px] whitespace-nowrap"><span className="text-[#3b9df2]">+0</span> dB</span>
        <span className="ml-auto h-[20px] w-px bg-[#555]" />
        <button aria-label="Pin" className="mr-[4px] ml-[5px]">
          <Svg w={10} h={11} className="text-[#a8a8a8]">
            <path d="M6 0l4 4-1.500.500L6.500 7 6 9 3.800 7.200 0 11l2.800-4.800L1 4l2-.500L5.500 1.500z" fill="currentColor" stroke="none" />
          </Svg>
        </button>
      </div>
    </div>
  );
}

function heat(v: number): [number, number, number] {
  const stops: [number, number, number, number][] = [
    [0, 0, 0, 0],
    [0.18, 14, 0, 26],
    [0.36, 48, 0, 66],
    [0.52, 105, 0, 68],
    [0.64, 180, 0, 20],
    [0.75, 250, 0, 0],
    [0.9, 255, 100, 0],
    [1, 255, 205, 40],
  ];
  const t = Math.min(1, Math.max(0, v));
  for (let i = 1; i < stops.length; i++) {
    if (t <= stops[i][0]) {
      const a = stops[i - 1];
      const b = stops[i];
      const k = (t - a[0]) / (b[0] - a[0]);
      return [a[1] + (b[1] - a[1]) * k, a[2] + (b[2] - a[2]) * k, a[3] + (b[3] - a[3]) * k];
    }
  }
  return [255, 205, 40];
}

function Spectrogram() {
  const ref = useRef<HTMLCanvasElement>(null);

  useEffect(() => {
    const canvas = ref.current;
    const ctx = canvas?.getContext('2d');
    if (!canvas || !ctx) return;
    const { width, height } = canvas;
    const img = ctx.createImageData(width, height);
    const rand = rng(77);
    const hit = new Float32Array(width);
    spikes.forEach(([x, u, d]) => {
      const s = Math.min(1, (u + d) / 160);
      for (let k = -1; k <= 1; k++) {
        if (hit[x + k] !== undefined) hit[x + k] = Math.max(hit[x + k], s * (k ? 0.25 : 1));
      }
    });
    let drift = 0.5;
    for (let x = 0; x < width; x++) {
      const a = loudness(x);
      const voice = Math.min(1, Math.max(0, (a - 6) / 14));
      const floor = Math.min(1, 0.42 + a / 9);
      drift = drift * 0.93 + rand() * 0.07;
      const r = rand();
      const col = 0.5 + drift * 0.6 + (r - 0.5) * 0.5;
      const reach = rand();
      const streak = rand() > 0.82 ? 0.5 + rand() * 0.6 : 0;
      let cell = 0;
      for (let y = 0; y < height; y++) {
        if (y % 3 === 0) cell = rand() - 0.5;
        let v = 0;
        if (y >= 9) {
          const t = (y - 9) / (height - 9);
          v = (0.05 + 0.45 * Math.pow(t, 1.15)) * col * (0.35 + floor * 0.65);
          if (t > 0.8) v += (t - 0.8) * 0.7 * floor;
          if (t > 0.93) v += 0.13 * floor;
          v += voice * col * (t > 0.5 ? 0.1 + 0.1 * t : t > 0.18 ? 0.08 : 0.02);
          v += hit[x] * (0.2 + 0.14 * t);
          // occasional streaks that fade towards the top
          const fade = Math.min(1, Math.max(0, (t - reach * 0.5) * 4));
          v += streak * fade * (0.24 - 0.08 * t) * floor;
          v += cell * (0.06 + 0.15 * t);
          if (v > 0.76) v = 0.76 + (v - 0.76) * (t > 0.84 && voice > 0.5 ? 0.85 : 0.35);
          if (t > 0.978) v *= 0.62;
        }
        const [cr, cg, cb] = heat(v);
        const o = (y * width + x) * 4;
        img.data[o] = cr;
        img.data[o + 1] = cg;
        img.data[o + 2] = cb;
        img.data[o + 3] = 255;
      }
    }
    ctx.putImageData(img, 0, 0);
  }, []);

  return (
    <div className="min-h-0 flex-[317] bg-black">
      <canvas ref={ref} width={VIEW_W} height={317} className="block h-full w-full" />
    </div>
  );
}

function DbScale() {
  const y = (v: number) => `${(v / VIEW_H) * 100}%`;
  const both = (list: number[]) => list.flatMap((db) => [{ db, v: MID - dbToY(db) }, { db, v: MID + dbToY(db) }]);
  return (
    <svg className="block min-h-0 w-full flex-[540] text-[11px]" fill="#b0b0b0" aria-hidden="true">
      <text x="9" y="14">dB</text>
      {both(dbMajor).map(({ db, v }) => (
        <g key={v}>
          <rect x="0" y={y(v)} width="4" height="1" />
          <text x="9" y={y(v)} dy="4">-{db}</text>
        </g>
      ))}
      {both(dbMinor).map(({ v }) => (
        <rect key={v} x="0" y={y(v)} width="2" height="1" fill="#8a8a8a" />
      ))}
      <rect x="0" y="50%" width="4" height="1" />
      <text x="9" y="50%" dy="4">-∞</text>
    </svg>
  );
}

function HzScale() {
  const y = (v: number) => `${(v / 317) * 100}%`;
  return (
    <svg className="block min-h-0 w-full flex-[317] text-[11px]" fill="#b0b0b0" aria-hidden="true">
      <text x="9" y="13">Hz</text>
      {hzTicks.map((t) => (
        <g key={t.y}>
          <rect x="0" y={y(t.y)} width={t.strong ? 4 : 2} height="1" />
          {t.label && <text x="9" y={y(t.y)} dy="5" fill={t.strong ? '#b0b0b0' : '#6a6a6a'}>{t.label}</text>}
        </g>
      ))}
    </svg>
  );
}

function Editor() {
  return (
    <section className="flex min-h-0 flex-1 flex-col border-2 border-[#1f7ad8] bg-[#232323]">
      <div className="flex h-[36px] shrink-0 items-start pl-[10px]">
        <button className="flex h-[26px] items-center gap-[14px] border-b-2 border-[#d8d8d8] pt-[2px] text-[#e4e4e4]">
          Editor: Lina_021.wav *
          <Burger />
        </button>
        <button className="ml-[24px] h-[26px]">Mixer</button>
      </div>
      <div className="flex shrink-0 items-center pl-[3px] text-[#8f8f8f]">
        <Overview />
        <button aria-label="Zoom out full" className="ml-[10px]"><Svg>{zoomFull}</Svg></button>
        <button aria-label="Toggle overview" className="mr-[25px] ml-[13px]">
          <Svg w={16} h={14}>
            <path d="M0 0h16v14H0z" fill="#5f5f5f" stroke="none" />
            <path d="M.500.500h15v13H.500zM0 4h16M0 9.500h16" />
          </Svg>
        </button>
      </div>
      <div className="mt-[16px] flex shrink-0 items-start pl-[4px]">
        <div className="min-w-0 flex-1 border-l-2 border-black"><TimeRuler /></div>
        <div className="flex w-[86px] pl-[8px] text-[#2d8ceb]">
          <button aria-label="Toggle snapping" className="flex h-[24px] w-[22px] items-center justify-center border border-[#333] bg-[#161616]">
            <Svg w={14} h={14}>
              <path d="M4.500 12.500H2.800A5.500 5.500 0 1 1 11.200 12.500H9.500" strokeWidth="3" />
              <path d="M1 11h5M8 11h5" stroke="#161616" />
            </Svg>
          </button>
          <button aria-label="Add marker" className="flex h-[24px] w-[22px] items-center justify-center border border-l-0 border-[#333] bg-[#161616]">
            <Svg w={8} h={16}>
              <path d="M0 0h8v4L5 7v9H3V7L0 4z" fill="currentColor" stroke="none" />
            </Svg>
          </button>
        </div>
      </div>
      <div className="mr-[5px] ml-[4px] flex min-h-0 flex-1 flex-row border-2 border-t-0 border-black">
        <div className="flex min-w-0 flex-1 flex-col">
          <Waveform />
          <div className="flex h-[10px] shrink-0 items-center justify-center bg-[#333]">
            <span className="ml-[80px] h-[5px] w-[26px] bg-[repeating-linear-gradient(90deg,#777_0_1px,transparent_1px_2px)]" />
          </div>
          <Spectrogram />
        </div>
        <div className="flex w-[79px] flex-col">
          <DbScale />
          <div className="flex h-[10px] shrink-0 items-center justify-end bg-[#333] pr-[18px]">
            <Svg w={6} h={4} className="text-[#999]"><path d="M0 0h6L3 4z" fill="currentColor" stroke="none" /></Svg>
          </div>
          <HzScale />
        </div>
      </div>
      <div className="flex h-[36px] shrink-0 items-center pr-[10px] pl-[10px]">
        <span className="w-[36%] pt-[2px] text-[17px] text-[#34a3f8]">31:57.663</span>
        <div className="flex">
          {transport.map((t) => (
            <button key={t.label} aria-label={t.label} className={`flex w-[32px] justify-center ${t.tone}`}>
              <svg width="18" height="18" viewBox="0 0 18 18" fill="currentColor" aria-hidden="true">{t.icon}</svg>
            </button>
          ))}
        </div>
        <div className="ml-auto flex">
          {zoomTools.map((z) => (
            <button key={z.label} aria-label={z.label} className={`flex w-[32px] justify-center ${z.dim ? 'text-[#3f3f3f]' : 'text-[#949494]'}`}>
              <Svg className="overflow-visible">{z.icon}</Svg>
            </button>
          ))}
        </div>
      </div>
    </section>
  );
}

/* ---------- bottom panels ---------- */

function LevelsPanel() {
  const x = (i: number) => `${0.2 + i * 1.6508}%`;
  return (
    <section className="flex min-w-0 flex-1 flex-col bg-[#232323] pr-[7px] pl-[6px]">
      <h2 className="flex h-[30px] items-center gap-[11px] pl-[7px] text-[#d8d8d8]">Levels <Burger /></h2>
      <div className="mt-[4px] flex h-[45px] border-2 border-b border-black bg-[#1d1d1d]">
        <span className="-ml-px w-[2px] bg-[#c3bd1c]" />
        <span className="mr-[8px] ml-auto w-px bg-black" />
      </div>
      <svg className="block h-[21px] w-full overflow-visible text-[9px]" fill="#a8a8a8" aria-hidden="true">
        {Array.from({ length: 361 }, (_, i) => (
          <rect key={i} x={x(i / 6)} y="1" width="1" height={i % 6 === 0 ? 4 : 2} fill="#8c8c8c" />
        ))}
        {Array.from({ length: 61 }, (_, i) => (
          <text key={i} x={x(i)} dx={i === 0 ? 3 : 0} y="16" textAnchor="middle">{i === 0 ? 'dB' : i === 60 ? '0' : i - 60}</text>
        ))}
      </svg>
    </section>
  );
}

const ranges = [
  { name: 'Selection', start: '31:57.663', end: '31:57.663', duration: '0:00.000' },
  { name: 'View', start: '5:10.000', end: '31:56.436', duration: '26:46.436' },
];

function SelectionPanel() {
  return (
    <section className="w-[295px] shrink-0 bg-[#232323] pl-[13px]">
      <h2 className="flex h-[31px] items-center gap-[14px] text-[#d8d8d8]">Selection/View <Burger /></h2>
      <table className="w-full table-fixed text-left">
        <thead>
          <tr className="h-[21px]">
            <th className="w-[54px]" aria-label="Range" />
            <th className="w-[77px] font-normal">Start</th>
            <th className="w-[75px] font-normal">End</th>
            <th className="font-normal">Duration</th>
          </tr>
        </thead>
        <tbody>
          {ranges.map((r) => (
            <tr key={r.name} className="h-[22px]">
              <th className="font-normal" scope="row">{r.name}</th>
              <td className="pl-[2px] text-[#3b9df2]">{r.start}</td>
              <td className="pl-[2px] text-[#3b9df2]">{r.end}</td>
              <td className="pl-[2px] text-[#3b9df2]">{r.duration}</td>
            </tr>
          ))}
        </tbody>
      </table>
    </section>
  );
}

function StatusBar() {
  return (
    <footer className="mt-[2px] flex h-[20px] shrink-0 items-center bg-[#232323] pt-[4px] pr-[61px] pl-[6px]">
      Stopped
      <div className="ml-auto flex h-[14px] items-center">
        <span className="flex items-center gap-[5px] border-l border-[#3a3a3a] pr-[14px] pl-[9px]">
          48000 Hz <i className="size-[6px] rounded-full bg-[#b0b0b0]" /> 32-bit (float) <i className="size-[6px] rounded-full bg-[#b0b0b0]" /> Mono
        </span>
        <span className="w-[73px] border-l border-[#3a3a3a] pl-[9px]">294,37 MB</span>
        <span className="w-[76px] border-l border-[#3a3a3a] pl-[18px]">26:47.663</span>
        <span className="w-[94px] border-x border-[#3a3a3a] pl-[9px] whitespace-nowrap">239,43 GB free</span>
      </div>
    </footer>
  );
}

function SidePanel() {
  return (
    <aside className="flex w-[36px] shrink-0 flex-col overflow-hidden bg-[#232323]">
      <div className="flex h-[32px] items-center border-b border-[#333] pl-[13px] text-[#d8d8d8]">
        <span className="w-[5px] overflow-hidden border-r border-[#333]">E</span>
      </div>
      <div className="h-[32px] border-b border-[#303030] pl-[11px] leading-[34px] whitespace-nowrap italic">No Selection</div>
      <div className="h-[38px] border-b border-[#303030] pl-[11px] leading-[34px] whitespace-nowrap text-[#5d5d5d]">Presets:</div>
      <div className="h-[33px] border-b border-[#303030]" />
      <div className="mt-auto h-[14px] bg-[#1d1d1d]" />
    </aside>
  );
}

export default function App() {
  return (
    <div className="flex h-screen flex-col bg-[#e8e0db]">
      <MenuBar />
      <div className="flex min-h-0 flex-1 flex-col overflow-hidden rounded-t-[9px] rounded-b-[9px] border-2 border-[#454545] bg-[#151515] font-['Noto_Sans',sans-serif] text-[11px] text-[#b8b8b8]">
        <div className="flex h-[20px] shrink-0 items-center bg-[#363635] pb-[2px]">
          <div className="flex w-[60px] gap-[6px] pl-[3px]">
            <span className="size-[10px] rounded-full bg-[#ff5f57]" />
            <span className="size-[10px] rounded-full bg-[#febc2e]" />
            <span className="size-[10px] rounded-full bg-[#28c840]" />
          </div>
          <h1 className="flex-1 pr-[60px] text-center font-['Inter',sans-serif] text-[12px] text-[#c8c8c8]">Adobe Audition</h1>
        </div>
        <ToolBar />
        <div className="mt-[4px] flex min-h-0 flex-1 gap-[5px]">
          <div className="flex w-[137px] shrink-0 flex-col gap-[5px]">
            <FilesPanel />
            <EffectsPanel />
            <HistoryPanel />
          </div>
          <div className="flex min-w-0 flex-1 flex-col gap-[4px]">
            <div className="flex min-h-0 flex-1 gap-[4px]">
              <div className="flex min-w-0 flex-1 flex-col"><Editor /></div>
              <SidePanel />
            </div>
            <div className="flex h-[100px] shrink-0 gap-[4px]">
              <LevelsPanel />
              <SelectionPanel />
            </div>
          </div>
        </div>
        <StatusBar />
      </div>
    </div>
  );
}
